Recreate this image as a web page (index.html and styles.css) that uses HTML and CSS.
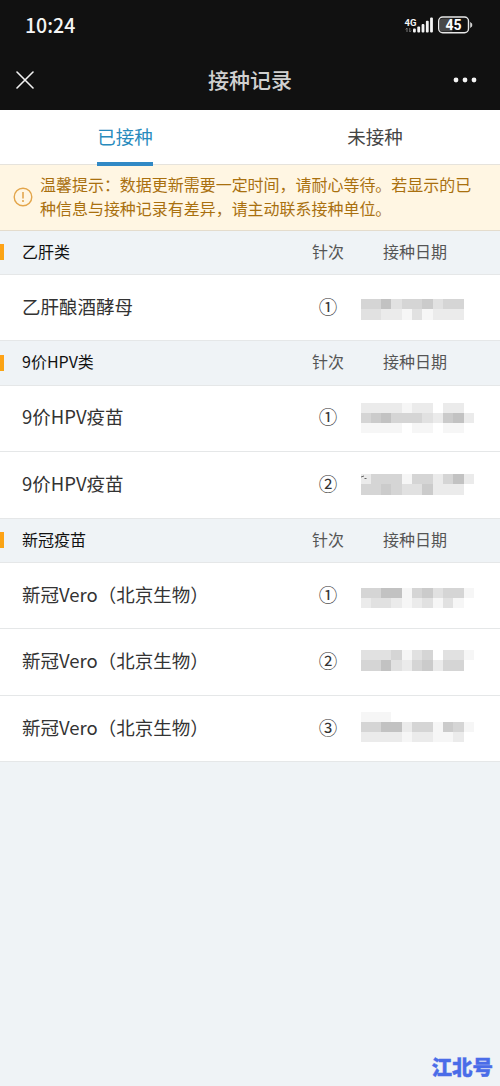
FILE: index.html
```html
<!DOCTYPE html>
<html lang="zh-CN">
<head>
<meta charset="utf-8">
<title>接种记录</title>
<link rel="stylesheet" href="styles.css">
</head>
<body>
<div class="screen">
  <header class="top">
    <div class="status">
      <span class="time">10:24</span>
      <svg class="indicators" width="70" height="22" viewBox="0 0 70 22">
        <text x="0.5" y="9.500" class="net">4G</text>
        <path d="M3 12v4M1.7 13.4L3 12M5.8 12v4M7.1 14.6L5.8 16" stroke="#777" fill="none"/>
        <g fill="#f4f4f4"><rect x="9" y="12.500" width="2.800" height="4" rx="1"/><rect x="13.300" y="10.500" width="2.800" height="6" rx="1"/><rect x="17.600" y="8" width="2.800" height="8.500" rx="1"/><rect x="21.900" y="4.800" width="2.800" height="11.700" rx="1"/><rect x="26.100" y="1.500" width="2.800" height="15" rx="1"/></g>
        <rect x="34.700" y="1" width="29.800" height="15.800" rx="4" fill="#111" stroke="#e8e8e8" stroke-width="1.400"/>
        <path d="M38.300 2.400h10v13h-10q-2.500 0-2.500-2.500V4.900q0-2.500 2.500-2.500z" fill="#484848"/>
        <path d="M66.600 6.500v5q1.300-.8 1.300-2.500T66.600 6.500z" fill="#eee" stroke="#eee" stroke-width=".6"/>
        <text x="49.600" y="14.100" text-anchor="middle" class="charge">45</text>
      </svg>
    </div>
    <div class="nav">
      <svg class="close" width="18" height="18" viewBox="0 0 18 18"><path d="M1 1l16 16M17 1L1 17" stroke="#f2f2f2" stroke-width="1.600" stroke-linecap="round"/></svg>
      <h1>接种记录</h1>
      <svg class="more" width="24" height="6" viewBox="0 0 24 6" fill="#f5f5f5"><circle cx="3" cy="3" r="2.400"/><circle cx="12" cy="3" r="2.400"/><circle cx="21" cy="3" r="2.400"/></svg>
    </div>
  </header>
  <nav class="tabs"><div class="tab active"><span>已接种</span></div><div class="tab"><span>未接种</span></div></nav>
  <div class="notice">
    <svg width="20" height="20" viewBox="0 0 20 20"><circle cx="10" cy="10" r="8.800" fill="none" stroke="#e3a54a" stroke-width="1.400"/><path d="M10 5v6.500" stroke="#e0a046" stroke-width="1.500"/><circle cx="10" cy="13.900" r="1" fill="#e0a046"/></svg>
    <p>温馨提示：数据更新需要一定时间，请耐心等待。若显示的已<br>种信息与接种记录有差异，请主动联系接种单位。</p>
  </div>
  <main>
    <div class="group"><b>乙肝类</b><span>针次</span><span class="date">接种日期</span></div>
    <div class="row"><b>乙肝酿酒酵母</b><span>①</span><svg class="mosaic" data-y="24" data-cells="ddfcddecdd/ccbbacabbb"></svg></div>
    <div class="group"><b>9价HPV类</b><span>针次</span><span class="date">接种日期</span></div>
    <div class="row"><b>9价HPV疫苗</b><span>①</span><svg class="mosaic" data-y="16.500" data-cells="bbbbabb.bb/defdddcbefb/aaaa.aa.aa"></svg></div>
    <div class="row"><b>9价HPV疫苗</b><span>②</span><svg class="mosaic" data-y="22" data-cells="bdddaddbdfb/ddedccebbb"><path d="M1 25l3-1M4.500 26.500h2" stroke="#666"/></svg></div>
    <div class="group"><b>新冠疫苗</b><span>针次</span><span class="date">接种日期</span></div>
    <div class="row"><b>新冠Vero（北京生物）</b><span>①</span><svg class="mosaic" data-y="24.500" data-cells="ddffadecdda/bccbabcaca"></svg></div>
    <div class="row"><b>新冠Vero（北京生物）</b><span>②</span><svg class="mosaic" data-y="20" data-cells="cccdacd.cca/ddfcbdebdd"></svg></div>
    <div class="row"><b>新冠Vero（北京生物）</b><span>③</span><svg class="mosaic" data-y="15.500" data-cells="aaa......./ddffbddaeda/bbbbabbaab"></svg></div>
  </main>
  <div class="watermark">江北号</div>
</div>
<script src="mosaic.js"></script>
</body>
</html>
```
FILE: styles.css
```css
* { box-sizing: border-box; }
body {
  margin: 0;
  background: #eff3f6;
  font-family: "Noto Sans CJK SC", sans-serif;
  color: #333;
}
.screen {
  width: 500px;
  height: 1086px;
  display: flex;
  flex-direction: column;
  overflow: hidden;
}
.top { height: 109.500px; background: #111; color: #f5f5f5; flex: none; }
.status {
  height: 50px;
  padding: 0 26px 0 25px;
  display: flex;
  align-items: center;
  justify-content: space-between;
}
.time { font-size: 19.500px; font-weight: 500; line-height: 24px; }
.indicators { margin-top: 3px; }
.net { font: 700 9.500px Roboto, sans-serif; fill: #f4f4f4; }
.charge { font: 700 14px Roboto, sans-serif; fill: #fff; }
.nav {
  height: 60px;
  padding: 0 23px 0 16px;
  display: grid;
  grid-template-columns: 60px 1fr 53px;
  align-items: center;
}
.nav h1 {
  margin: 0;
  padding-bottom: 2px;
  font-size: 21px;
  line-height: 28px;
  font-weight: 500;
  text-align: center;
  color: #d0d0d0;
}
.more { justify-self: end; }
.tabs {
  height: 55.500px;
  flex: none;
  display: flex;
  background: #fff;
  border-bottom: 1px solid #e6e3dc;
}
.tab { flex: 1; display: flex; justify-content: center; font-size: 18.500px; color: #444; }
.tab span { height: 56px; line-height: 52px; }
.active { color: #288bbd; }
.active span { position: relative; z-index: 1; border-bottom: 4px solid #3189c5; }
.notice {
  height: 65.500px;
  flex: none;
  padding: 7px 0 0 13px;
  display: flex;
  gap: 7px;
  background: #fff6e3;
  border-bottom: 1px solid #e4dccd;
}
.notice svg { margin-top: 15px; flex: none; }
.notice p {
  margin: 0;
  font-size: 15.970px;
  line-height: 24px;
  color: #a9700f;
  white-space: nowrap;
}
.group, .row {
  display: grid;
  grid-template-columns: 284px 44px 1fr;
  align-items: center;
  padding-left: 22px;
  border-bottom: 1px solid #e5e7e8;
}
.group b, .row b { font-weight: 400; white-space: nowrap; }
.group span, .row span { text-align: center; }
.group {
  height: 44.250px;
  font-size: 16px;
  line-height: 24px;
  color: #555;
  padding-bottom: 3px;
  background: linear-gradient(#ffa217, #f8a414) 0 50% / 4px 16px no-repeat #eff3f6;
}
.group b { color: #111; }
.group .date { text-align: left; padding-left: 33px; }
.row { height: 66.500px; background: #fff; font-size: 18.500px; line-height: 28px; }
.row b, .row span { padding-bottom: 4px; }
.mosaic { width: 118px; height: 65px; margin-left: 10px; }
.watermark {
  margin-top: auto;
  padding: 0 7px 5px 0;
  text-align: right;
  font-size: 20.500px;
  line-height: 30px;
  font-weight: 900;
  color: #4a6ce8;
  -webkit-text-stroke: 0.4px #4a6ce8;
}
```
FILE: mosaic.js
```js
// Draws the pixelated date masks from compact shade codes.
const shades = { a: '#f6f6f6', b: '#ebebeb', c: '#e1e1e1', d: '#d5d5d5', e: '#cbcbcb', f: '#c2c2c2' };
const cell = 10.33;
document.querySelectorAll('.mosaic').forEach(svg => {
  svg.dataset.cells.split('/').forEach((line, r) => {
    [...line].forEach((code, c) => {
      if (!shades[code]) return;
      const rect = document.createElementNS('http://www.w3.org/2000/svg', 'rect');
      rect.setAttribute('x', c * cell + 0.5);
      rect.setAttribute('y', Number(svg.dataset.y) + r * cell);
      rect.setAttribute('width', cell);
      rect.setAttribute('height', cell);
      rect.setAttribute('fill', shades[code]);
      rect.setAttribute('shape-rendering', 'crispEdges');
      svg.prepend(rect);
    });
  });
});
```
